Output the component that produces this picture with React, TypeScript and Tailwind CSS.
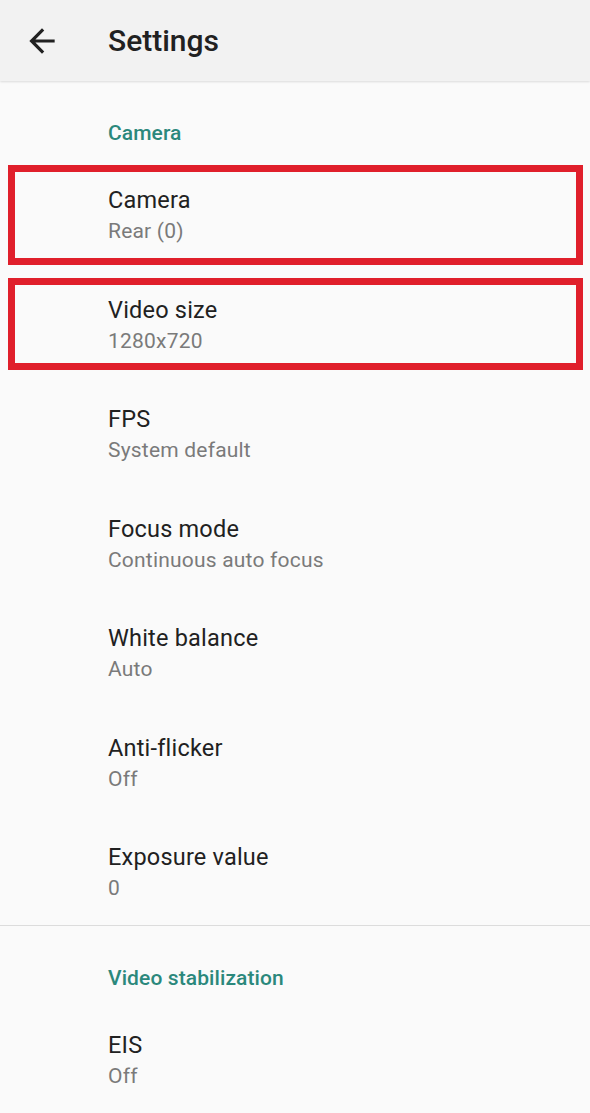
import React from 'react';

type Pref = { title: string; summary: string; mark?: 'a' | 'b' };

const cameraPrefs: Pref[] = [
  { title: 'Camera', summary: 'Rear (0)', mark: 'a' },
  { title: 'Video size', summary: '1280x720', mark: 'b' },
  { title: 'FPS', summary: 'System default' },
  { title: 'Focus mode', summary: 'Continuous auto focus' },
  { title: 'White balance', summary: 'Auto' },
  { title: 'Anti-flicker', summary: 'Off' },
  { title: 'Exposure value', summary: '0' },
];

function Category({ label }: { label: string }) {
  return (
    <div className="h-[74px] pl-[108px] pt-[38px]">
      <div className="text-[21px] leading-[28px] font-medium tracking-[0.1px] text-[#2b887c]">{label}</div>
    </div>
  );
}

function PrefRow({ title, summary, mark }: Pref) {
  return (
    <div className="relative h-[109.5px] pl-[108px] pt-[30px]">
      <div className="text-[23.5px] leading-[30px] tracking-[0.2px] text-[#212121]">{title}</div>
      <div className="mt-[3px] text-[21px] leading-[26px] tracking-[0.2px] text-[#7a7a7a]">{summary}</div>
      {mark === 'a' && (
        <div className="pointer-events-none absolute left-[8px] right-[7px] top-[10px] bottom-0 border-[7px] border-[#e01f2b]" />
      )}
      {mark === 'b' && (
        <div className="pointer-events-none absolute left-[8px] right-[7px] top-[13.5px] bottom-[4px] border-[7px] border-[#e01f2b]" />
      )}
    </div>
  );
}

export default function App() {
  return (
    <div className="min-h-[1113px] w-full bg-[#fafafa]" style={{ fontFamily: 'Roboto, "Noto Sans", sans-serif' }}>
      <header className="flex h-[81px] items-center bg-[#f2f2f2] shadow-[0_1px_2px_rgba(0,0,0,0.12)]">
        <div className="flex w-[108px] items-center pl-[23px]">
          <svg width="38" height="38" viewBox="0 0 24 24" fill="#212121">
            <path d="M20 11H7.83l5.59-5.59L12 4l-8 8 8 8 1.41-1.41L7.83 13H20v-2z" />
          </svg>
        </div>
        <h1 className="text-[30px] font-medium leading-none text-[#212121]">Settings</h1>
      </header>

      <Category label="Camera" />
      {cameraPrefs.map((p) => (
        <PrefRow key={p.title} {...p} />
      ))}

      <div className="mt-[3px] h-px bg-[#dcdcdc]" />

      <Category label="Video stabilization" />
      <PrefRow title="EIS" summary="Off" />
    </div>
  );
}
